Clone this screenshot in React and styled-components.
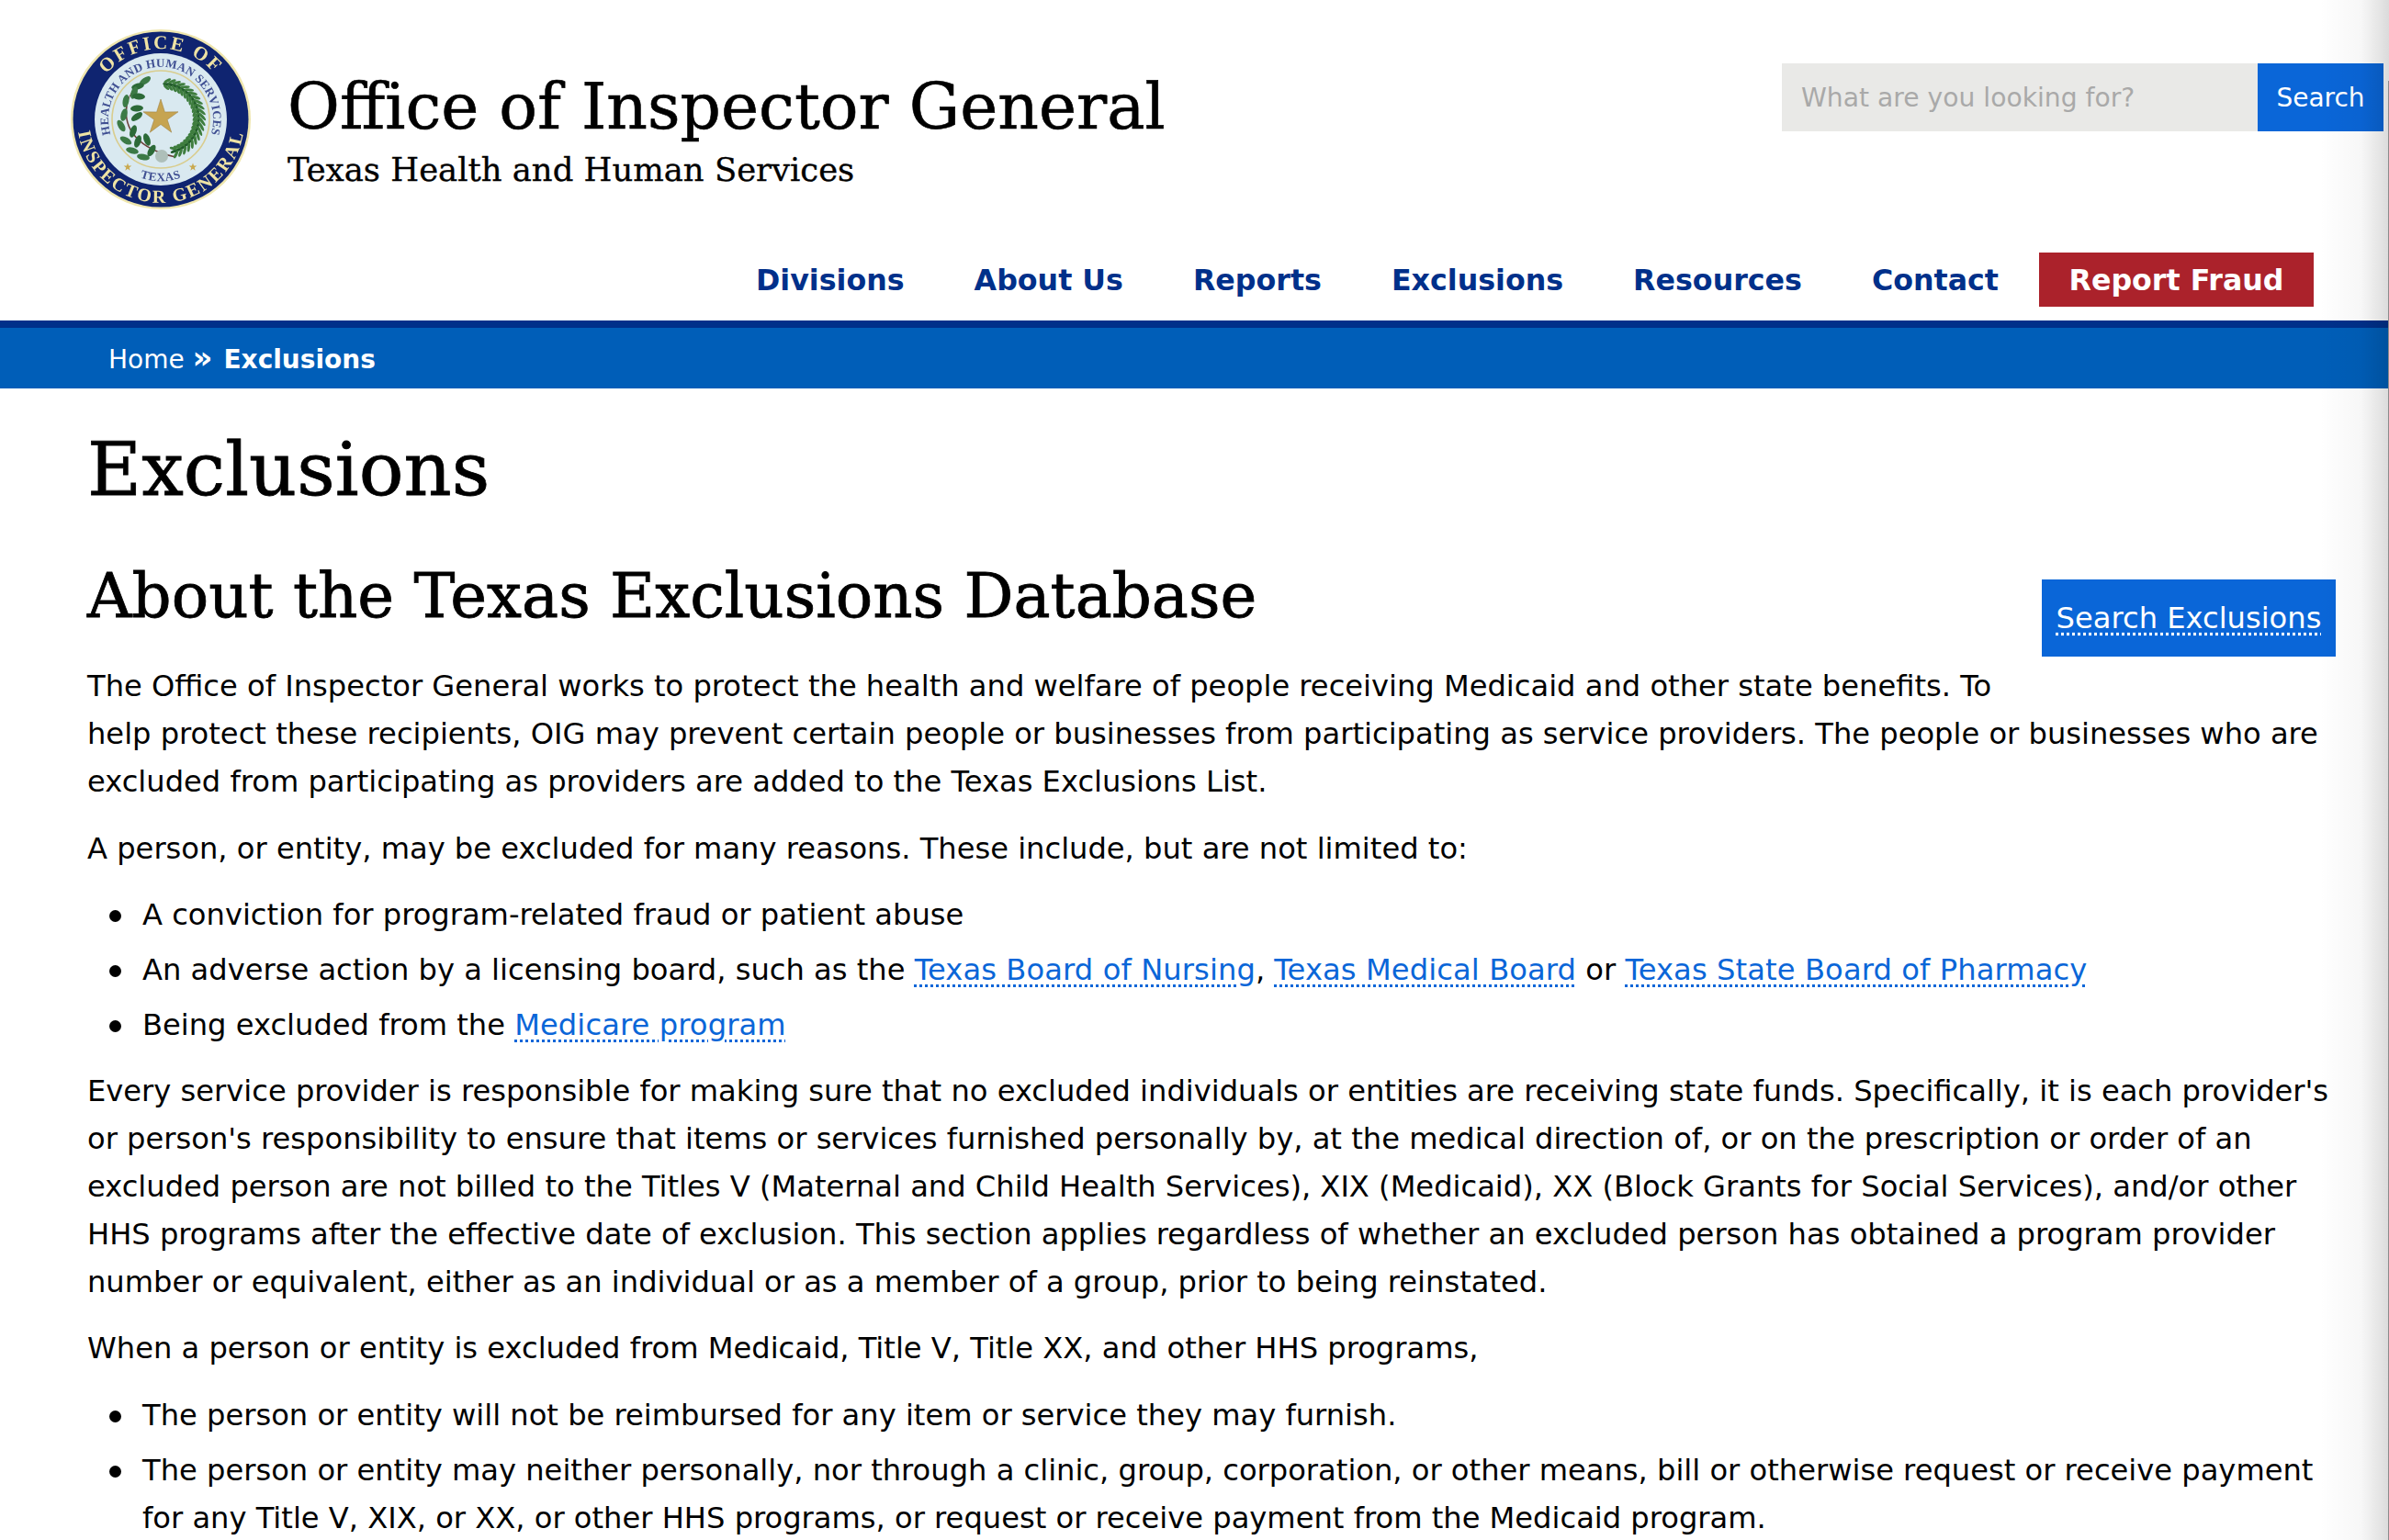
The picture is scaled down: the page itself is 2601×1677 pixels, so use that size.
import React from "react";
import styled, { createGlobalStyle } from "styled-components";

const Global = createGlobalStyle`
  html, body { margin: 0; padding: 0; background: #fff; }
  body { font-family: "DejaVu Sans", Verdana, sans-serif; color: #000; }
  #root { height: 1677px; overflow: hidden; position: relative; }
`;
const SLAB = `"DejaVu Serif", serif`;

const Page = styled.div`position: relative; width: 2601px; height: 1677px; overflow: hidden;`;
const EdgeShade = styled.div`
  position: absolute; top: 0; right: 0; bottom: 0; width: 76px; pointer-events: none;
  background: linear-gradient(to right, rgba(0,0,0,0), rgba(0,0,0,0.03) 60%, rgba(0,0,0,0.14));
`;
const EdgeLine = styled.div`
  position: absolute; top: 88px; right: 0; bottom: 0; width: 1px; background: #8c8c8c; pointer-events: none;
`;
const Header = styled.header`
  display: flex; justify-content: space-between; align-items: flex-start;
  height: 275px; padding: 0 6px 0 75px; box-sizing: border-box;
`;
const Brand = styled.div`display: flex; align-items: flex-start; gap: 38px; padding-top: 30px;`;
const Titles = styled.div`display: flex; flex-direction: column; padding-top: 42px;`;
const Title = styled.div`font-family: ${SLAB}; font-size: 69.4px; line-height: 88px; font-weight: 400; -webkit-text-stroke: 0.6px #000;`;
const Sub = styled.div`font-family: ${SLAB}; font-size: 35.4px; line-height: 46px; margin-top: 2px; -webkit-text-stroke: 0.35px #000;`;
const SearchForm = styled.form`display: flex; margin-top: 69px; height: 74px;`;
const SearchInput = styled.input`
  width: 518px; box-sizing: border-box; border: 0; background: #e9e9e7; padding: 1px 21px 0;
  font-family: "DejaVu Sans", sans-serif; font-size: 28.2px; outline: none;
  &::placeholder { color: #a9a9a9; opacity: 1; }
`;
const SearchButton = styled.button`
  width: 137px; border: 0; background: #0a66d8; color: #fff; padding: 1px 0 0;
  font-family: "DejaVu Sans", sans-serif; font-size: 28px;
`;
const Nav = styled.nav`
  display: flex; justify-content: flex-end; align-items: center;
  height: 74px; padding: 0 82px 15px 0; box-sizing: border-box;
`;
const NavLink = styled.a`
  font-weight: 700; font-size: 31.7px; padding-top: 1px; color: #00308a; margin-right: 76px; text-decoration: none;
  &:nth-last-child(2) { margin-right: 44px; }
`;
const FraudButton = styled.a`
  display: flex; align-items: center; justify-content: center; width: 299px; height: 59px;
  background: #ab222b; color: #fff; font-weight: 700; font-size: 31.7px;
`;
const Crumbs = styled.div`
  display: flex; align-items: center; height: 74px; box-sizing: border-box;
  border-top: 8px solid #00308a; background: #005eb8; color: #fff;
  padding: 0 0 1px 118px; font-size: 28px;
`;
const CrumbText = styled.span`white-space: pre;`;
const CrumbSep = styled.b`font-size: 34px; line-height: 1; margin-right: 3px;`;
const Main = styled.main`padding: 0 58px 0 95px; font-size: 32.15px; line-height: 52px;`;
const H1 = styled.h1`font-family: ${SLAB}; font-weight: 400; font-size: 81px; line-height: 100px; margin: 38px 0 0; -webkit-text-stroke: 0.8px #000;`;
const H2 = styled.h2`font-family: ${SLAB}; font-weight: 400; font-size: 67.3px; line-height: 80px; margin: 0; -webkit-text-stroke: 0.8px #000;`;
const HeadRow = styled.div`margin-top: 48px; margin-bottom: 32px;`;
const FloatButton = styled.a`
  float: right; display: flex; align-items: center; justify-content: center;
  width: 320px; height: 84px; margin: 22px 0 20px 40px; background: #0a66d8; color: #fff;
  text-decoration: underline dotted; text-underline-offset: 5px; font-size: 32.15px;
`;
const P = styled.p`margin: 0 0 20.6px;`;
const List = styled.ul`margin: 0 0 20.2px; padding: 0 0 0 60px; list-style: none;`;
const Item = styled.li`
  position: relative;
  & + & { margin-top: 7.7px; }
  &::before {
    content: ""; position: absolute; left: -36px; top: 21px; width: 13px; height: 13px;
    border-radius: 50%; background: #000;
  }
`;
const A = styled.a`
  color: #0a66d8; letter-spacing: 0.1px; text-decoration: underline dotted; text-underline-offset: 5px;
`;
const SealSvg = styled.svg`flex: none; filter: blur(0.4px);`;

const Leaf = ({ x, y, r, l = 16, w, c = "#2f6b3a" }) => (
  <ellipse cx={x} cy={y} rx={l / 2} ry={w || l / 4.6} fill={c} transform={`rotate(${r} ${x} ${y})`} />
);
const starPoints = (cx, cy, R, rr) =>
  Array.from({ length: 10 }, (_, i) => {
    const a = (-90 + i * 36) * Math.PI / 180;
    const d = i % 2 ? rr : R;
    return `${cx + d * Math.cos(a)},${cy + d * Math.sin(a)}`;
  }).join(" ");

const Seal = () => {
  const left = [[83,58,-35],[75,64,-15],[71,71,-70],[76,75,5],[62,80,-80],[74,88,-5],[60,95,-75],[74,97,-35],[57,107,60],[70,113,-70],[62,123,30],[75,124,-70],[69,134,15],[85,122,70],[81,141,10],[90,134,-60]];
  const right = [];
  for (let a = -80; a <= 72; a += 7) {
    const t = a * Math.PI / 180;
    const rr = 37 + 4 * Math.cos(t);
    const cx = 100, cy = 99;
    const s = 1 - Math.abs(a) / 300;
    right.push([cx + rr * Math.cos(t), cy + rr * Math.sin(t), a + 90, 12 * s]);
    right.push([cx + (rr + 4) * Math.cos(t), cy + (rr + 4) * Math.sin(t), a + 50, 12 * s]);
    right.push([cx + (rr - 3) * Math.cos(t), cy + (rr - 3) * Math.sin(t), a + 125, 11 * s]);
  }
  return (
    <SealSvg width="200" height="200" viewBox="0 0 200 200" aria-label="Office of Inspector General seal">
      <defs>
        <path id="oigTop" d="M 23 100 A 77 77 0 0 1 177 100" />
        <path id="oigBot" d="M 9 100 A 91 91 0 0 0 191 100" />
        <path id="oigIn" d="M 59.700 140.300 A 57 57 0 1 1 140.300 140.300" />
        <path id="oigTx" d="M 40 130 A 67 67 0 0 0 160 130" />
      </defs>
      <circle cx="100" cy="100" r="98" fill="#efe6ad" />
      <circle cx="100" cy="100" r="95.500" fill="#0f2470" />
      <circle cx="100" cy="100" r="72" fill="#d9e9f0" />
      <circle cx="100" cy="100" r="53" fill="none" stroke="#d9cd8e" strokeWidth="1.6" />
      <text fontFamily="Liberation Serif, serif" fontWeight="700" fontSize="21" fill="#efe3a4" letterSpacing="2.4" textAnchor="middle">
        <textPath href="#oigTop" startOffset="50%">OFFICE OF</textPath>
      </text>
      <text fontFamily="Liberation Serif, serif" fontWeight="700" fontSize="20" fill="#efe3a4" letterSpacing="2.2" textAnchor="middle">
        <textPath href="#oigBot" startOffset="50%">INSPECTOR GENERAL</textPath>
      </text>
      <text fontFamily="Liberation Serif, serif" fontWeight="700" fontSize="13" fill="#3f4f92" letterSpacing="0.2" textAnchor="middle">
        <textPath href="#oigIn" startOffset="50%">HEALTH AND HUMAN SERVICES</textPath>
      </text>
      <text fontFamily="Liberation Serif, serif" fontWeight="700" fontSize="13" fill="#3f4f92" letterSpacing="0.5" textAnchor="middle">
        <textPath href="#oigTx" startOffset="50%">TEXAS</textPath>
      </text>
      <polygon points={starPoints(64, 152, 4.5, 1.8)} fill="#c9a94e" />
      <polygon points={starPoints(135, 152, 4.5, 1.8)} fill="#c9a94e" />
      <path d="M63 85 C 59 110 75 132 116 141" fill="none" stroke="#6b3f38" strokeWidth="1.6" />
      <path d="M88 56 C 73 62 65 72 63 85" fill="none" stroke="#6b3f38" strokeWidth="1" />
      {left.map(([x, y, r], i) => <Leaf key={i} x={x} y={y} r={r} l={14} w={3.4} c={i % 2 ? "#2c6a38" : "#3c7a46"} />)}
      {right.map(([x, y, r, l], i) => <Leaf key={i} x={x} y={y} r={r} l={l} w={1.6} c={i % 3 ? "#3e7d3e" : "#215a2b"} />)}
      <circle cx="101" cy="140" r="7" fill="#aebfb9" />
      <polygon points={starPoints(100, 98, 20, 7.5)} fill="#c6a451" stroke="#96793a" strokeWidth="0.5" />
    </SealSvg>
  );
};

export default function App() {
  return (
    <Page>
      <Global />
      <Header>
        <Brand>
          <Seal />
          <Titles>
            <Title>Office of Inspector General</Title>
            <Sub>Texas Health and Human Services</Sub>
          </Titles>
        </Brand>
        <SearchForm>
          <SearchInput placeholder="What are you looking for?" />
          <SearchButton type="button">Search</SearchButton>
        </SearchForm>
      </Header>
      <Nav>
        <NavLink>Divisions</NavLink>
        <NavLink>About Us</NavLink>
        <NavLink>Reports</NavLink>
        <NavLink>Exclusions</NavLink>
        <NavLink>Resources</NavLink>
        <NavLink>Contact</NavLink>
        <FraudButton>Report Fraud</FraudButton>
      </Nav>
      <Crumbs><CrumbText>Home <CrumbSep>»</CrumbSep> <b>Exclusions</b></CrumbText></Crumbs>
      <Main>
        <H1>Exclusions</H1>
        <HeadRow>
          <FloatButton>Search Exclusions</FloatButton>
          <H2>About the Texas Exclusions Database</H2>
        </HeadRow>
        <P>The Office of Inspector General works to protect the health and welfare of people receiving Medicaid and other state benefits. To help protect these recipients, OIG may prevent certain people or businesses from participating as service providers. The people or businesses who are excluded from participating as providers are added to the Texas Exclusions List.</P>
        <P>A person, or entity, may be excluded for many reasons. These include, but are not limited to:</P>
        <List>
          <Item>A conviction for program-related fraud or patient abuse</Item>
          <Item>An adverse action by a licensing board, such as the <A>Texas Board of Nursing</A>, <A>Texas Medical Board</A> or <A>Texas State Board of Pharmacy</A></Item>
          <Item>Being excluded from the <A>Medicare program</A></Item>
        </List>
        <P>Every service provider is responsible for making sure that no excluded individuals or entities are receiving state funds. Specifically, it is each provider's or person's responsibility to ensure that items or services furnished personally by, at the medical direction of, or on the prescription or order of an excluded person are not billed to the Titles V (Maternal and Child Health Services), XIX (Medicaid), XX (Block Grants for Social Services), and/or other HHS programs after the effective date of exclusion. This section applies regardless of whether an excluded person has obtained a program provider number or equivalent, either as an individual or as a member of a group, prior to being reinstated.</P>
        <P>When a person or entity is excluded from Medicaid, Title V, Title XX, and other HHS programs,</P>
        <List>
          <Item>The person or entity will not be reimbursed for any item or service they may furnish.</Item>
          <Item>The person or entity may neither personally, nor through a clinic, group, corporation, or other means, bill or otherwise request or receive payment for any Title V, XIX, or XX, or other HHS programs, or request or receive payment from the Medicaid program.</Item>
        </List>
      </Main>
      <EdgeShade />
      <EdgeLine />
    </Page>
  );
}
